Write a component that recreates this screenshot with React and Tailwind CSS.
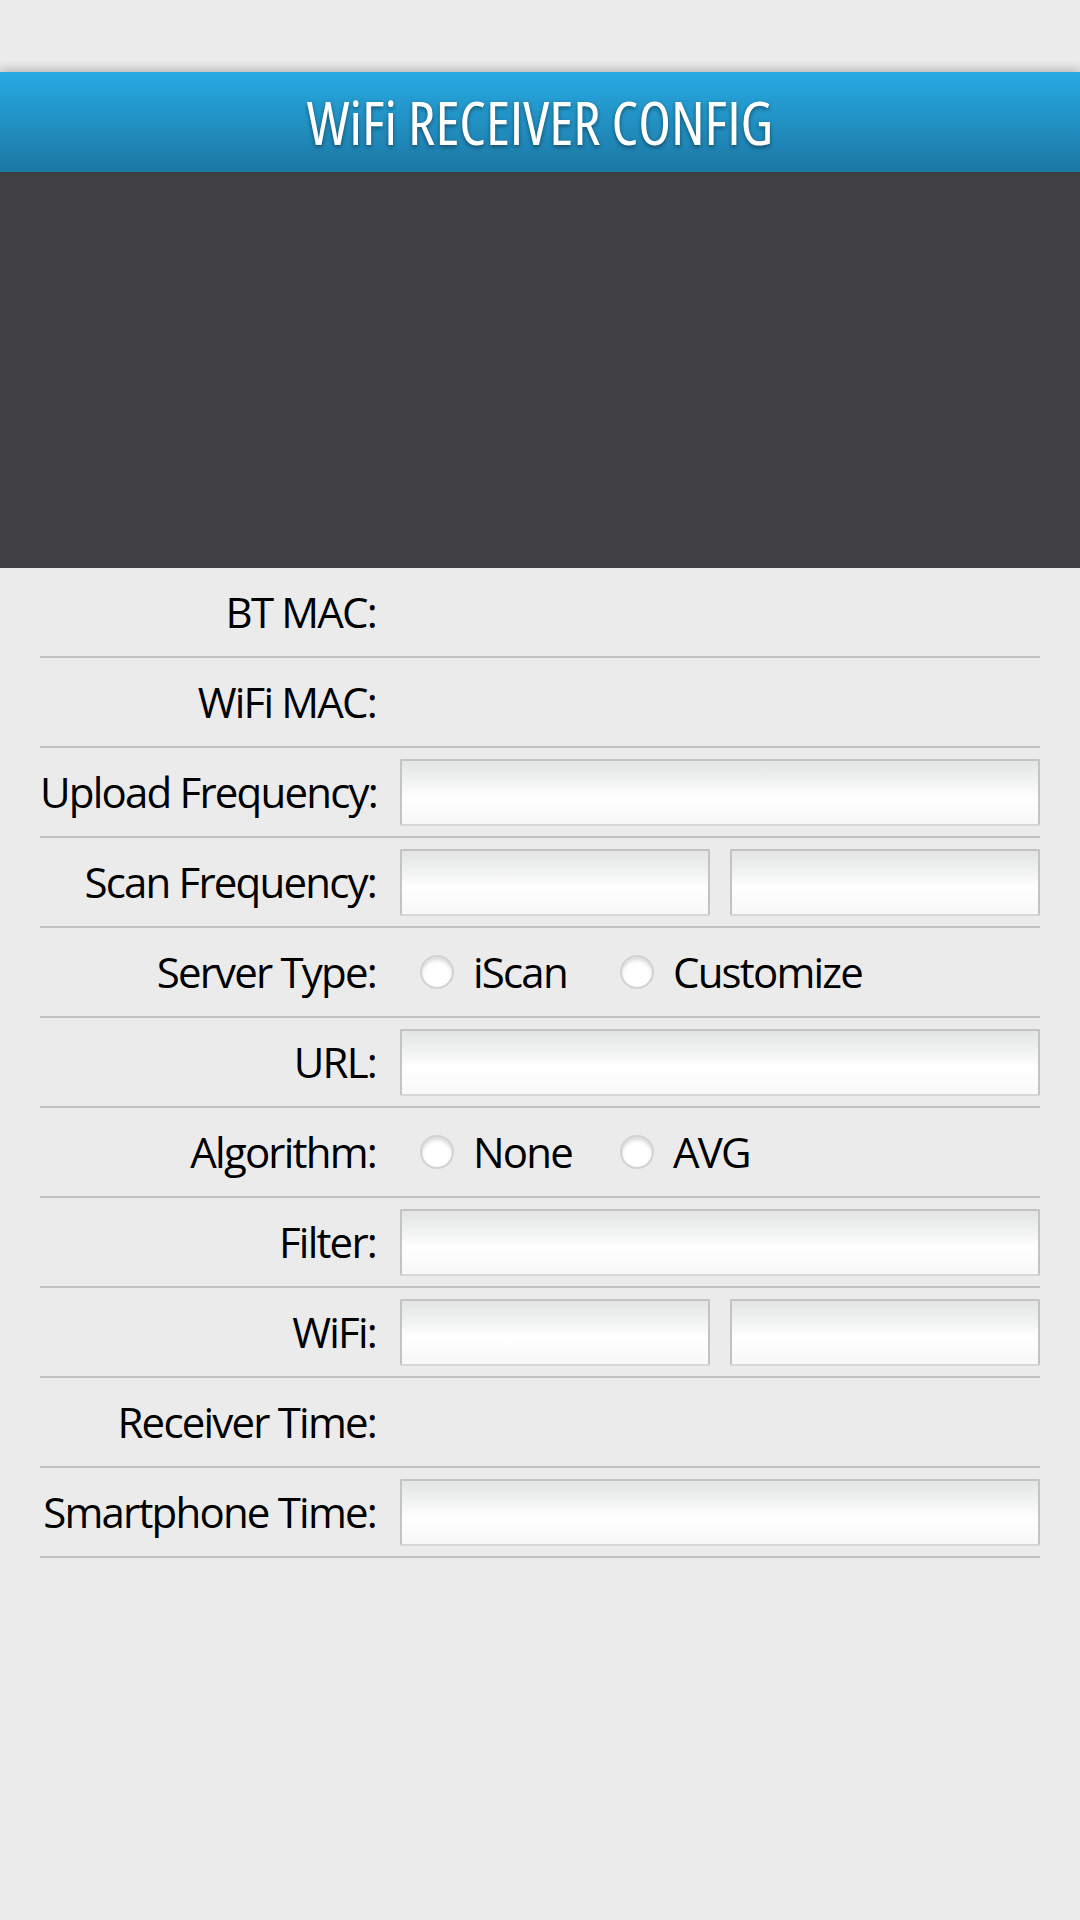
const ROWS = [
  { label: 'BT MAC:', type: 'text' },
  { label: 'WiFi MAC:', type: 'text' },
  { label: 'Upload Frequency:', type: 'input' },
  { label: 'Scan Frequency:', type: 'double' },
  { label: 'Server Type:', type: 'radio', options: ['iScan', 'Customize'] },
  { label: 'URL:', type: 'input' },
  { label: 'Algorithm:', type: 'radio', options: ['None', 'AVG'] },
  { label: 'Filter:', type: 'input' },
  { label: 'WiFi:', type: 'double' },
  { label: 'Receiver Time:', type: 'text' },
  { label: 'Smartphone Time:', type: 'input' },
];

const Campo = ({ className = '' }) => (
  <div
    className={`h-[67px] rounded-[2px] border-2 border-[#c3c3c3] border-b-[#d7d7d7] bg-[linear-gradient(to_bottom,#e3e5e5_0%,#f2f3f3_35%,#ffffff_58%,#f7f7f7_100%)] ${className}`}
  />
);

const Radio = ({ label }) => (
  <div className="w-[200px] shrink-0 flex items-center pl-[20px] whitespace-nowrap">
    <span className="w-[34px] h-[34px] shrink-0 rounded-full border-2 border-[#d2d2d2] bg-[radial-gradient(circle_at_50%_62%,#ffffff_45%,#ededed_100%)] shadow-[inset_0_3px_3px_rgba(0,0,0,0.1)]" />
    <span className="ml-[19px]">{label}</span>
  </div>
);

export default function App() {
  return (
    <div className="w-[1080px] h-[1920px] bg-[#ebebeb] font-['Open_Sans','Noto_Sans',sans-serif] text-black overflow-hidden">
      <div className="h-[72px]" />

      {/* barra de titulo */}
      <div className="relative h-[100px] flex items-center justify-center bg-[linear-gradient(to_bottom,#27aae2,#1c78a4)] shadow-[0_-3px_9px_rgba(0,0,0,0.22)]">
        <h1 className="text-white text-[60px] leading-none font-normal font-stretch-[75%] [text-shadow:0_2px_4px_rgba(0,0,0,0.45)]">
          WiFi RECEIVER CONFIG
        </h1>
      </div>

      <div className="h-[396px] bg-[#414143]" />

      <div className="px-[40px]">
        {ROWS.map((r) => (
          <div key={r.label} className="h-[90px] flex items-center border-b-2 border-[#c1c1c1]">
            <div className="w-[336px] shrink-0 text-right text-[42px] leading-none tracking-[-1.8px] whitespace-nowrap">
              {r.label}
            </div>
            <div className="flex-1 ml-[24px] flex items-center">
              {r.type === 'input' && <Campo className="w-full" />}
              {r.type === 'double' && (
                <div className="w-full flex gap-[20px]">
                  <Campo className="flex-1" />
                  <Campo className="flex-1" />
                </div>
              )}
              {r.type === 'radio' && (
                <div className="flex text-[42px] leading-none tracking-[-1.8px]">
                  {r.options.map((o) => (
                    <Radio key={o} label={o} />
                  ))}
                </div>
              )}
            </div>
          </div>
        ))}
      </div>
    </div>
  );
}
